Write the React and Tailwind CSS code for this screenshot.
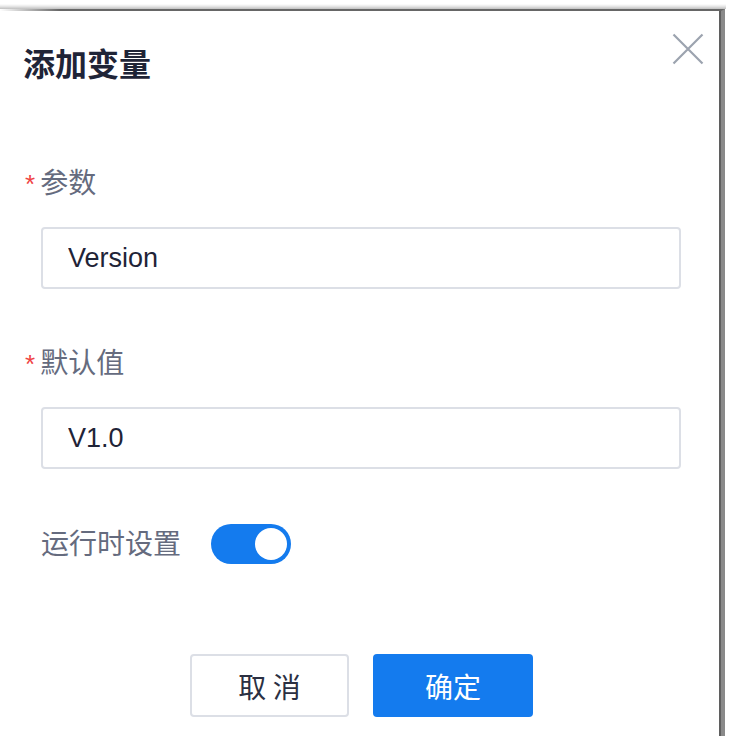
import React, { useState } from "react";

const AddVariableDialog = () => {
  const [name, setName] = useState("Version");
  const [value, setValue] = useState("V1.0");
  const [runtime, setRuntime] = useState(true);

  return (
    <div className="w-[731px] h-[736px] bg-white pt-[4px] font-['Noto_Sans_CJK_SC','Liberation_Sans',sans-serif]">
      {/* screenshot frame edge */}
      <div className="h-[5px] w-[726px] bg-[linear-gradient(to_bottom,rgba(0,0,0,0)_0%,rgba(0,0,0,0.08)_40%,rgba(0,0,0,0.25)_100%)]" />
      <div className="relative w-[725px] h-[727px] bg-white border-t-2 border-[#666] border-r-[4px] [border-right-color:#8a8a8a] shadow-[inset_-2px_0_0_#5f5f5f]">
        <div className="absolute left-0 top-[-2px] h-[2px] w-[60px] bg-[linear-gradient(to_right,#fff,rgba(255,255,255,0))]" />

        <button
          type="button"
          className="absolute right-[17px] top-[22px] w-[32px] h-[32px] flex items-center justify-center"
        >
          <svg width="32" height="32" viewBox="0 0 32 32" fill="none">
            <path
              d="M1.5 1.5L30.5 30.5M30.5 1.5L1.5 30.5"
              stroke="#9ca3af"
              strokeWidth="2.2"
            />
          </svg>
        </button>

        <div className="flex flex-col pt-[30px]">
          <h2 className="pl-[23px] text-[32px] leading-[42px] font-bold text-[#1f2437]">
            添加变量
          </h2>

          <div className="mt-[78px] flex items-center pl-[25px] h-[40px]">
            <span className="text-[#ef4444] text-[26px] leading-[20px] mr-[5px] mt-[6px] font-['Liberation_Sans',sans-serif]">*</span>
            <label className="text-[28px] leading-[40px] text-[#656b7e]">参数</label>
          </div>
          <input
            value={name}
            onChange={(e) => setName(e.target.value)}
            className="mt-[26px] ml-[41px] w-[640px] h-[62px] px-[25px] border-2 border-[#dcdfe6] rounded-[4px] text-[27px] text-[#1f2437] font-['Liberation_Sans',sans-serif] outline-none"
          />

          <div className="mt-[52px] flex items-center pl-[25px] h-[40px]">
            <span className="text-[#ef4444] text-[26px] leading-[20px] mr-[5px] mt-[6px] font-['Liberation_Sans',sans-serif]">*</span>
            <label className="text-[28px] leading-[40px] text-[#656b7e]">默认值</label>
          </div>
          <input
            value={value}
            onChange={(e) => setValue(e.target.value)}
            className="mt-[26px] ml-[41px] w-[640px] h-[62px] px-[25px] border-2 border-[#dcdfe6] rounded-[4px] text-[27px] text-[#1f2437] font-['Liberation_Sans',sans-serif] outline-none"
          />

          <div className="mt-[55px] ml-[41px] flex items-center gap-[30px] h-[40px]">
            <span className="text-[28px] leading-[40px] text-[#656b7e] -mt-[4px]">运行时设置</span>
            <button
              type="button"
              onClick={() => setRuntime(!runtime)}
              className={
                runtime
                  ? "w-[80px] h-[40px] rounded-full bg-[#147bee] flex items-center justify-end px-[4px]"
                  : "w-[80px] h-[40px] rounded-full bg-[#d1d5db] flex items-center justify-start px-[4px]"
              }
            >
              <span className="w-[32px] h-[32px] rounded-full bg-white block" />
            </button>
          </div>

          <div className="mt-[90px] flex justify-center gap-[24px] pl-[2px]">
            <button
              type="button"
              className="w-[159px] h-[63px] border-2 border-[#dcdfe6] rounded-[4px] bg-white text-[28px] text-[#2b3042]"
            >
              取 消
            </button>
            <button
              type="button"
              className="w-[160px] h-[63px] rounded-[4px] bg-[#147bee] text-[28px] text-white"
            >
              确定
            </button>
          </div>
        </div>
      </div>
    </div>
  );
};

export default function App() {
  return <AddVariableDialog />;
}
